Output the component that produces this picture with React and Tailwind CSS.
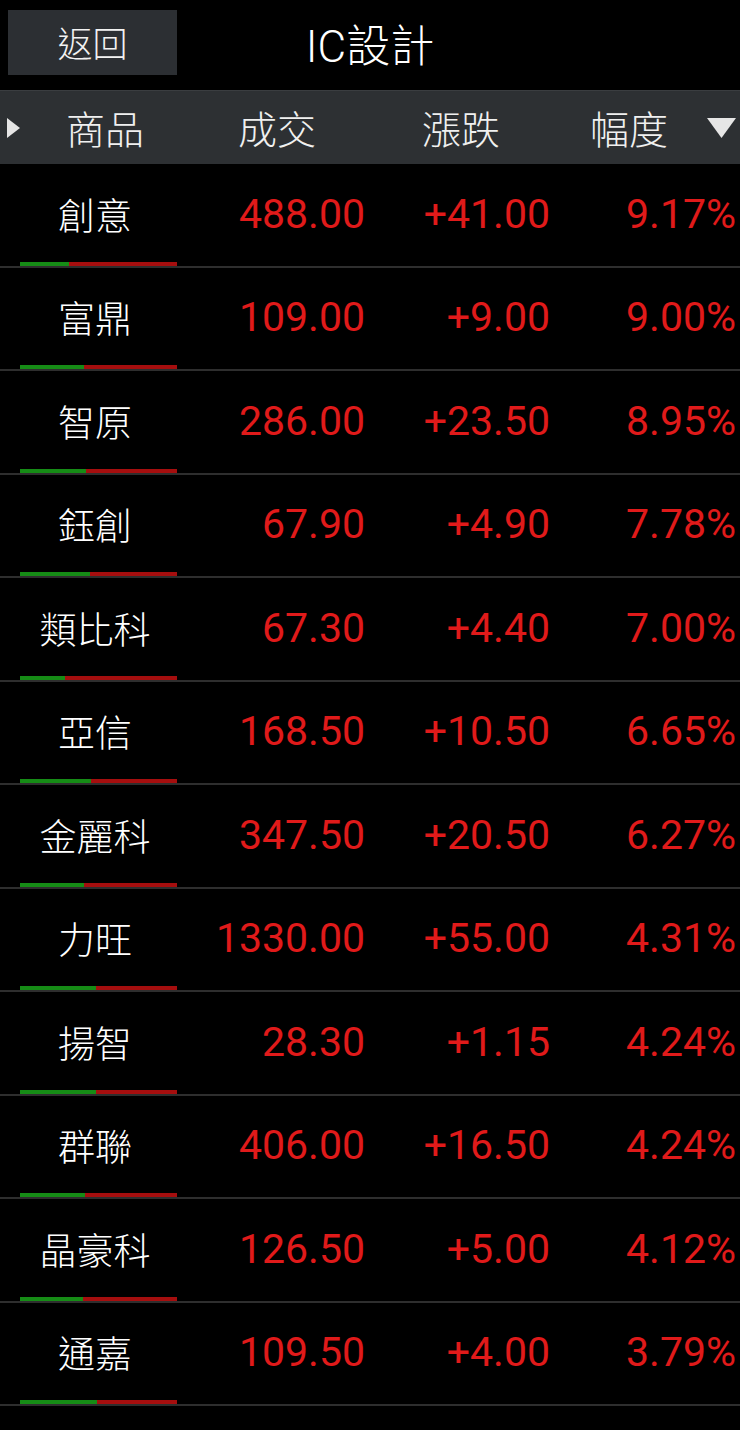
const rows = [
  { name: "創意", price: "488.00", chg: "+41.00", pct: "9.17%", green: 49 },
  { name: "富鼎", price: "109.00", chg: "+9.00", pct: "9.00%", green: 64 },
  { name: "智原", price: "286.00", chg: "+23.50", pct: "8.95%", green: 66 },
  { name: "鈺創", price: "67.90", chg: "+4.90", pct: "7.78%", green: 70 },
  { name: "類比科", price: "67.30", chg: "+4.40", pct: "7.00%", green: 45 },
  { name: "亞信", price: "168.50", chg: "+10.50", pct: "6.65%", green: 71 },
  { name: "金麗科", price: "347.50", chg: "+20.50", pct: "6.27%", green: 64 },
  { name: "力旺", price: "1330.00", chg: "+55.00", pct: "4.31%", green: 76 },
  { name: "揚智", price: "28.30", chg: "+1.15", pct: "4.24%", green: 76 },
  { name: "群聯", price: "406.00", chg: "+16.50", pct: "4.24%", green: 65 },
  { name: "晶豪科", price: "126.50", chg: "+5.00", pct: "4.12%", green: 63 },
  { name: "通嘉", price: "109.50", chg: "+4.00", pct: "3.79%", green: 77 },
];

const cjk = { fontFamily: '"Noto Sans CJK TC", "Noto Sans", sans-serif' };
const num = { fontFamily: 'Roboto, "Liberation Sans", sans-serif' };

export default function App() {
  return (
    <div className="w-[740px] h-[1430px] bg-black overflow-hidden text-white">
      {/* top bar */}
      <div className="h-[90px] flex items-start relative">
        <div
          className="mt-[10px] ml-[8px] w-[169px] h-[65px] bg-[#2c2f33] flex items-center justify-center text-[35px] font-light text-[#f2f2f2]"
          style={cjk}
        >
          返回
        </div>
        <div className="absolute left-0 right-0 top-[13px] text-center text-[44px] leading-[60px] text-white">
          <span style={num} className="font-light">IC</span>
          <span style={cjk} className="font-light">設計</span>
        </div>
      </div>

      {/* header */}
      <div
        className="h-[74px] bg-[#2d3033] border-t border-[#3a3d40] flex items-center text-[39px] font-light text-[#f0f0f0]"
        style={cjk}
      >
        <svg width="13" height="20" viewBox="0 0 13 20" className="ml-[7px]">
          <polygon points="0,0 13,10 0,20" fill="#e6e6e6" />
        </svg>
        <span className="ml-[46px] w-[78px] text-center">商品</span>
        <span className="ml-[94px] w-[78px] text-center">成交</span>
        <span className="ml-[106px] w-[78px] text-center">漲跌</span>
        <span className="ml-[90px] w-[78px] text-center">幅度</span>
        <svg width="29" height="20" viewBox="0 0 29 20" className="ml-[39px]">
          <polygon points="0,0 29,0 14.5,20" fill="#e6e6e6" />
        </svg>
      </div>

      {/* rows */}
      {rows.map((r) => (
        <div key={r.name} className="h-[103.5px] flex flex-col border-b-2 border-[#2e2e2e]">
          <div className="flex-1 flex items-center pt-[3px]">
            <div className="w-[190px] text-center text-[37px] font-light text-white" style={cjk}>
              {r.name}
            </div>
            <div className="w-[175px] text-right text-[41px] text-[#e01a1a]" style={num}>
              {r.price}
            </div>
            <div className="w-[185px] text-right text-[41px] text-[#e01a1a]" style={num}>
              {r.chg}
            </div>
            <div className="w-[186px] text-right text-[41px] text-[#e01a1a]" style={num}>
              {r.pct}
            </div>
          </div>
          <div className="ml-[20px] w-[157px] h-[4px] flex">
            <div className="h-full bg-[#168c16]" style={{ width: r.green }} />
            <div className="h-full flex-1 bg-[#a50e0e]" />
          </div>
        </div>
      ))}
    </div>
  );
}
